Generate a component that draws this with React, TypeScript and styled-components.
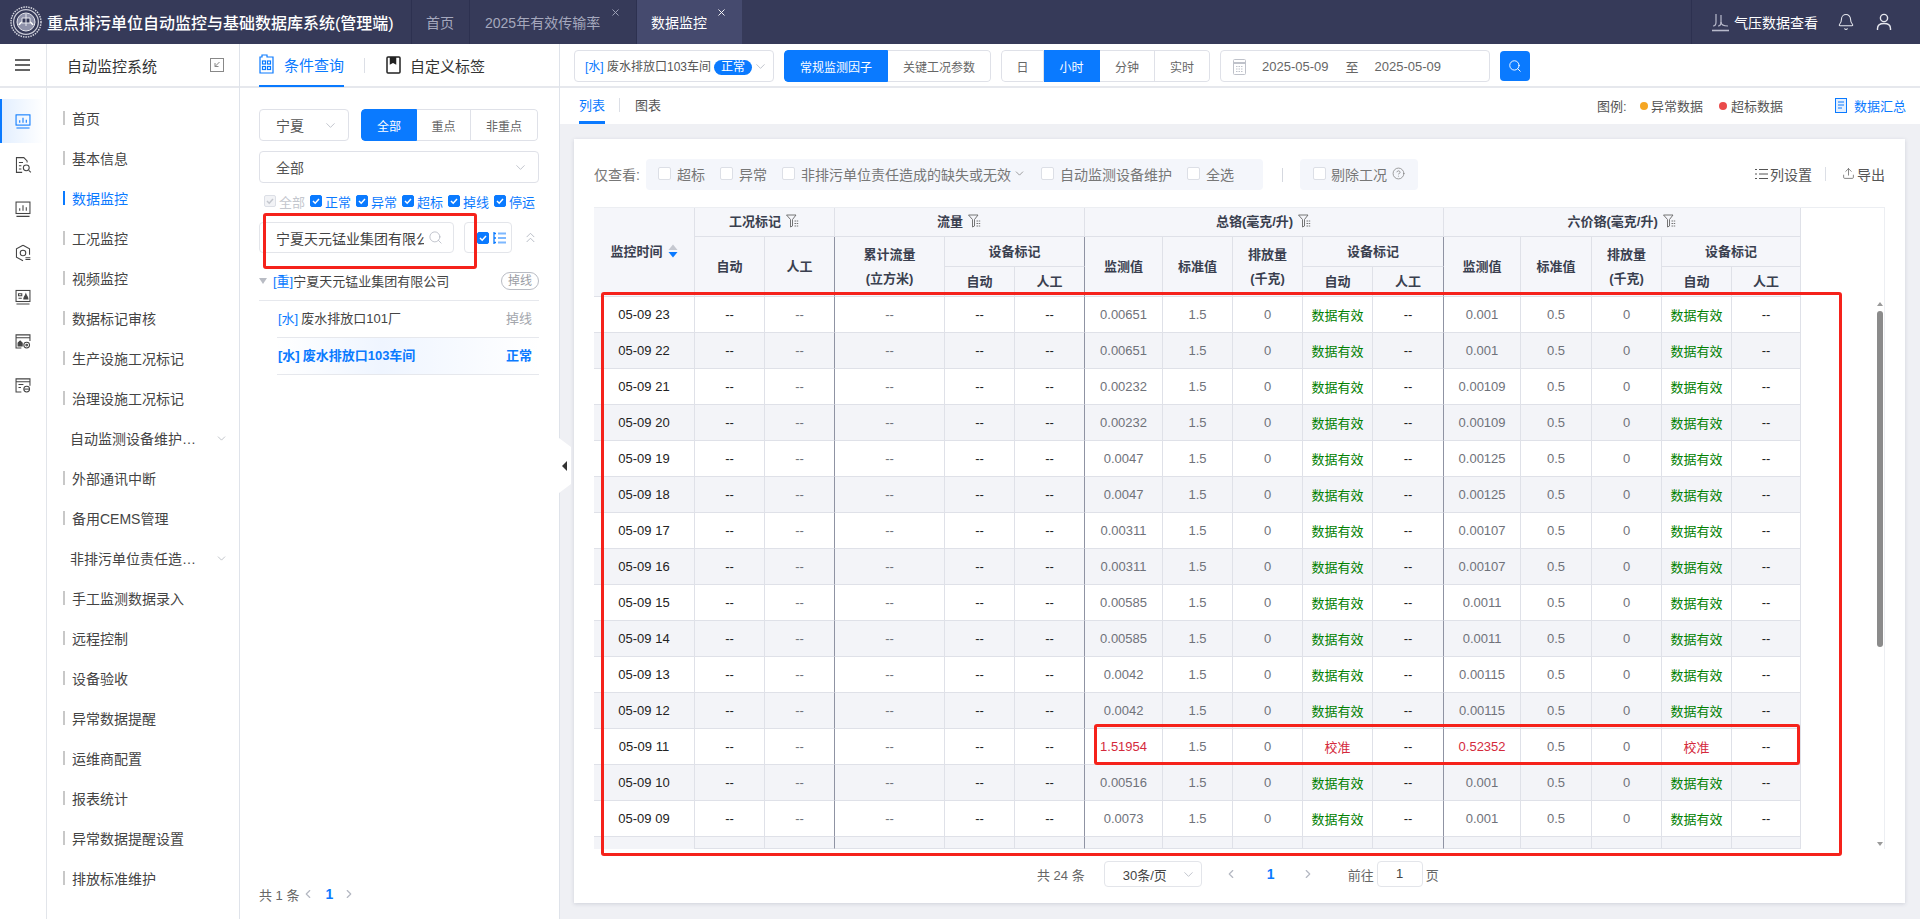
import React from 'react';
import styled, { createGlobalStyle } from 'styled-components';
import { Bell, ChevronDown, ChevronLeft, ChevronRight, ChevronsUp, CircleHelp, Search, Upload, X } from 'lucide-react';

const BLUE = '#0a7aff';
const HEAD_LINE = '#dfe1e8';
const EDGE_LINE = '#8f93a3';

const GlobalStyle = createGlobalStyle`
	html, body {
		margin: 0;
		width: 1920px;
		height: 919px;
		overflow: hidden;
		background: #fff;
		font-family: "Liberation Sans", "Noto Sans CJK SC", sans-serif;
		color: #333;
	}
	* {
		box-sizing: border-box;
	}
`;

const Shell = styled.div`
	position: relative;
	width: 1920px;
	height: 919px;
	overflow: hidden;
`;

const TopBar = styled.header`
	display: flex;
	align-items: center;
	height: 44px;
	background: #363a59;
	color: #fff;
`;

const LogoBox = styled.div`
	width: 47px;
	height: 44px;
	padding: 6px 0 0 10px;
`;

const AppTitle = styled.h1`
	width: 364px;
	margin: 0;
	font-size: 16px;
	font-weight: 500;
	white-space: nowrap;
`;

const TopTab = styled.div<{ $w: number; $active?: boolean; $pad?: number }>`
	position: relative;
	display: flex;
	align-items: center;
	width: ${p => p.$w}px;
	height: 44px;
	padding-left: ${p => p.$pad || 14}px;
	font-size: 14px;
	border-left: 1px solid #2d3150;
	color: ${p => (p.$active ? '#fff' : '#a5a8bd')};
	background: ${p => (p.$active ? '#454a6e' : 'transparent')};
	white-space: nowrap;
`;

const TabClose = styled(X)<{ $active?: boolean }>`
	position: absolute;
	top: 7px;
	right: 15px;
	width: 11px;
	height: 11px;
	color: ${p => (p.$active ? '#fff' : '#a5a8bd')};
`;

const TopRight = styled.div`
	display: flex;
	align-items: center;
	margin-left: auto;
	width: 229px;
	height: 44px;
	padding-left: 20px;
	border-left: 1px solid #2d3150;
	font-size: 14px;
`;

const PressureLabel = styled.span`
	margin: 0 19px 0 5px;
	white-space: nowrap;
`;

const TopIcon = styled.span`
	display: flex;
	margin-right: 21px;
	color: #e6e7ee;
`;

const Body = styled.div`
	display: flex;
	height: 875px;
`;

const Rail = styled.nav`
	flex: none;
	width: 47px;
	border-right: 1px solid #e2e5ea;
`;

const RailHead = styled.div`
	display: flex;
	align-items: center;
	justify-content: center;
	height: 44px;
	padding-right: 1px;
	border-bottom: 2px solid #e6e8ed;
`;

const RailList = styled.div`
	padding-top: 11px;
`;

const RailItem = styled.div<{ $active?: boolean }>`
	display: flex;
	align-items: center;
	justify-content: center;
	width: 44px;
	height: 44px;
	color: ${p => (p.$active ? BLUE : '#444')};
	border-left: 2px solid ${p => (p.$active ? BLUE : 'transparent')};
	background: ${p => (p.$active ? 'linear-gradient(90deg, #e3efff, #fff)' : 'none')};
`;

const SideBar = styled.aside`
	flex: none;
	width: 193px;
	border-right: 1px solid #dfe3ea;
`;

const SideHead = styled.div`
	display: flex;
	align-items: center;
	justify-content: space-between;
	height: 44px;
	padding: 0 15px 0 20px;
	font-size: 15px;
	color: #333;
	border-bottom: 2px solid #e6e8ed;
`;

const SideMenu = styled.ul`
	margin: 0;
	padding: 11px 0 0;
	list-style: none;
`;

const SideItem = styled.li<{ $active?: boolean; $sub?: boolean }>`
	display: flex;
	align-items: center;
	height: 40px;
	padding-left: ${p => (p.$sub ? 23 : 16)}px;
	padding-bottom: 2px;
	font-size: 14px;
	color: ${p => (p.$active ? BLUE : '#444')};
`;

const SideMark = styled.i<{ $active?: boolean }>`
	flex: none;
	width: 2px;
	height: 14px;
	margin-right: 7px;
	background: ${p => (p.$active ? BLUE : '#c8c8c8')};
`;

const SideLabel = styled.span`
	width: 127px;
	overflow: hidden;
	white-space: nowrap;
	text-overflow: ellipsis;
`;

const SideChevron = styled(ChevronDown)`
	flex: none;
	width: 13px;
	height: 13px;
	margin-left: auto;
	margin-right: 11px;
	color: #a8acb5;
	stroke-width: 1.3;
`;

const Panel = styled.section`
	flex: none;
	display: flex;
	flex-direction: column;
	width: 320px;
	border-right: 1px solid #dfe3ea;
`;

const PanelTabs = styled.div`
	display: flex;
	align-items: center;
	height: 44px;
	padding-left: 19px;
	border-bottom: 2px solid #e6e8ed;
`;

const PanelTab = styled.div<{ $active?: boolean }>`
	display: flex;
	align-items: center;
	gap: ${p => (p.$active ? 10 : 9)}px;
	height: 44px;
	font-size: 15px;
	color: ${p => (p.$active ? BLUE : '#333')};
	border-bottom: ${p => (p.$active ? `2px solid ${BLUE}` : 'none')};
	white-space: nowrap;
`;

const PanelTabGap = styled.i`
	width: 1px;
	height: 15px;
	margin: 0 21px 0 20px;
	background: #dcdfe6;
`;

const PanelBody = styled.div`
	flex: 1;
	display: flex;
	flex-direction: column;
	padding: 21px 20px 0 19px;
`;

const FieldRow = styled.div<{ $mt?: number }>`
	display: flex;
	align-items: center;
	margin-top: ${p => p.$mt || 0}px;
`;

const SelectBox = styled.div<{ $w?: number; $h?: number; $pad?: number }>`
	display: flex;
	align-items: center;
	justify-content: space-between;
	width: ${p => (p.$w ? `${p.$w}px` : '100%')};
	height: ${p => p.$h || 32}px;
	padding: 0 ${p => (p.$pad ? 5 : 10)}px 0 ${p => p.$pad || 16}px;
	font-size: 14px;
	color: #555;
	background: #fff;
	border: 1px solid #dfe1e8;
	border-radius: 4px;
	white-space: nowrap;
`;

const SelectChevron = styled(ChevronDown)`
	flex: none;
	width: 15px;
	height: 15px;
	color: #b4b8c2;
	stroke-width: 1.3;
`;

const Segment = styled.div<{ $ml?: number }>`
	display: flex;
	margin-left: ${p => p.$ml || 0}px;
	height: 32px;
	border-radius: 4px;
	overflow: hidden;
`;

const SegmentItem = styled.div<{ $w: number; $active?: boolean }>`
	display: flex;
	align-items: center;
	justify-content: center;
	width: ${p => p.$w}px;
	font-size: 12px;
	color: ${p => (p.$active ? '#fff' : '#666')};
	background: ${p => (p.$active ? BLUE : '#fff')};
	border: 1px solid ${p => (p.$active ? BLUE : '#dfe1e8')};
	border-left: none;
	white-space: nowrap;
	&:first-child {
		border-left: 1px solid ${p => (p.$active ? BLUE : '#dfe1e8')};
		border-radius: 4px 0 0 4px;
	}
	&:last-child {
		border-radius: 0 4px 4px 0;
	}
`;

const CheckRow = styled.div`
	display: flex;
	align-items: center;
	gap: 5px;
	height: 16px;
	margin: 10px 0 13px 5px;
`;

const CheckItem = styled.label<{ $off?: boolean }>`
	display: flex;
	align-items: center;
	gap: 3px;
	font-size: 13px;
	color: ${p => (p.$off ? '#c4c7ce' : BLUE)};
`;

const Tick = styled.span<{ $off?: boolean }>`
	display: flex;
	align-items: center;
	justify-content: center;
	width: 12px;
	height: 12px;
	border-radius: 2px;
	background: ${p => (p.$off ? '#f2f3f6' : BLUE)};
	border: 1px solid ${p => (p.$off ? '#dcdfe6' : BLUE)};
	color: ${p => (p.$off ? '#c4c7ce' : '#fff')};
`;

const SearchRow = styled.div`
	display: flex;
	align-items: center;
	height: 31px;
`;

const SearchBox = styled.div`
	display: flex;
	align-items: center;
	justify-content: space-between;
	width: 196px;
	height: 31px;
	padding: 0 10px 0 16px;
	border: 1px solid #e3e5ea;
	border-radius: 4px;
	font-size: 14px;
	color: #444;
`;

const SearchText = styled.span`
	width: 148px;
	overflow: hidden;
	white-space: nowrap;
`;

const TreeSwitch = styled.div`
	display: flex;
	align-items: center;
	gap: 4px;
	width: 48px;
	height: 31px;
	margin-left: 10px;
	padding-left: 12px;
	border: 1px solid #e3e5ea;
	border-radius: 4px;
`;

const CollapseUp = styled(ChevronsUp)`
	width: 17px;
	height: 17px;
	margin-left: 10px;
	color: #b4b8c2;
	stroke-width: 1.3;
`;

const TreeGroup = styled.div`
	display: flex;
	align-items: center;
	height: 37px;
	margin-top: 11px;
	padding-bottom: 3px;
	font-size: 13px;
	color: #444;
	border-bottom: 1px solid #e6e8ed;
`;

const Caret = styled.i`
	width: 0;
	height: 0;
	margin: 0 6px 0 0;
	border-left: 4px solid transparent;
	border-right: 4px solid transparent;
	border-top: 6px solid #b9bcc4;
`;

const Tag = styled.b<{ $gap?: number }>`
	margin-right: ${p => p.$gap || 0}px;
	font-weight: inherit;
	color: ${BLUE};
`;

const OfflinePill = styled.span`
	margin-left: auto;
	width: 38px;
	height: 18px;
	font-size: 12px;
	line-height: 16px;
	text-align: center;
	color: #9a9da5;
	border: 1px solid #b9bcc4;
	border-radius: 9px;
`;

const TreeLeaf = styled.div<{ $active?: boolean }>`
	display: flex;
	align-items: center;
	justify-content: space-between;
	height: 37px;
	margin-left: 18px;
	padding: 0 7px 3px 1px;
	font-size: 13px;
	font-weight: ${p => (p.$active ? 700 : 400)};
	color: ${p => (p.$active ? BLUE : '#444')};
	border-bottom: 1px solid #e6e8ed;
	background: ${p => (p.$active ? 'linear-gradient(90deg, #fff, #eff5ff 40%, #fff)' : 'none')};
`;

const LeafState = styled.span<{ $on?: boolean }>`
	color: ${p => (p.$on ? BLUE : '#a3a6ad')};
`;

const SmallPager = styled.div`
	display: flex;
	align-items: center;
	height: 20px;
	margin: auto 0 15px;
	font-size: 13px;
	color: #666;
`;

const PageNumber = styled.span<{ $ml: number; $mr: number }>`
	margin: 0 ${p => p.$mr}px 0 ${p => p.$ml}px;
	font-weight: 700;
	font-size: 14px;
	color: ${BLUE};
`;

const PagerArrow = styled.span<{ $ml?: number }>`
	display: flex;
	margin-left: ${p => p.$ml || 0}px;
	color: #b4b8c2;
`;

const Main = styled.main`
	position: relative;
	flex: 1;
	display: flex;
	flex-direction: column;
	min-width: 0;
`;

const Toolbar = styled.div`
	display: flex;
	gap: 10px;
	height: 44px;
	padding: 6px 0 0 14px;
	border-bottom: 2px solid #e6e8ed;
`;

const StationText = styled.span`
	font-size: 12px;
	color: #555;
`;

const StateBadge = styled.span`
	display: inline-block;
	width: 38px;
	margin-left: 3px;
	height: 15px;
	font-size: 12px;
	line-height: 15px;
	text-align: center;
	color: #fff;
	background: ${BLUE};
	border-radius: 8px;
`;

const DateBox = styled.div`
	display: flex;
	align-items: center;
	width: 270px;
	height: 32px;
	padding-left: 12px;
	font-size: 13px;
	color: #666;
	border: 1px solid #dfe1e8;
	border-radius: 4px;
`;

const DateValue = styled.span<{ $ml: number }>`
	margin-left: ${p => p.$ml}px;
	white-space: nowrap;
`;

const SearchButton = styled.button`
	display: flex;
	align-items: center;
	justify-content: center;
	width: 30px;
	height: 30px;
	margin-top: 1px;
	padding: 0;
	color: #fff;
	background: ${BLUE};
	border: none;
	border-radius: 4px;
`;

const ViewTabs = styled.div`
	display: flex;
	align-items: center;
	height: 36px;
	padding: 0 14px 0 19px;
	font-size: 13px;
`;

const ViewTab = styled.div<{ $active?: boolean }>`
	display: flex;
	align-items: center;
	height: 36px;
	padding-bottom: ${p => (p.$active ? 0 : 3)}px;
	color: ${p => (p.$active ? BLUE : '#555')};
	border-bottom: ${p => (p.$active ? `3px solid ${BLUE}` : 'none')};
`;

const ViewGap = styled.i`
	width: 1px;
	height: 14px;
	margin: 0 15px 3px 14px;
	background: #dcdfe6;
`;

const Legend = styled.div`
	display: flex;
	align-items: center;
	margin-left: auto;
	padding-bottom: 1px;
	color: #555;
	white-space: nowrap;
`;

const LegendTitle = styled.span`
	width: 43px;
`;

const LegendDot = styled.i<{ $c: string; $ml?: number; $gap: number }>`
	width: 8px;
	height: 8px;
	margin: 0 ${p => p.$gap}px 0 ${p => p.$ml || 0}px;
	border-radius: 50%;
	background: ${p => p.$c};
`;

const SummaryLink = styled.span`
	display: flex;
	align-items: center;
	gap: 7px;
	margin-left: 52px;
	color: ${BLUE};
`;

const Content = styled.div`
	flex: 1;
	padding: 15px 15px 0 14px;
	background: #eff0f4;
`;

const Card = styled.div`
	height: 764px;
	padding: 20px 20px 0;
	background: #fff;
	box-shadow: 0 1px 4px rgba(40, 50, 80, 0.16);
`;

const CollapseBump = styled.div`
	position: absolute;
	top: 394px;
	left: -1px;
	display: flex;
	align-items: center;
	width: 12px;
	height: 55px;
	padding-left: 3px;
	background: #fff;
	clip-path: polygon(0 0, 100% 9px, 100% calc(100% - 9px), 0 100%);
`;

const BumpArrow = styled.i`
	width: 0;
	height: 0;
	border-top: 5px solid transparent;
	border-bottom: 5px solid transparent;
	border-right: 5px solid #333;
`;

const FilterRow = styled.div`
	display: flex;
	align-items: center;
	height: 31px;
	font-size: 14px;
	color: #777;
`;

const FilterLabel = styled.span`
	width: 52px;
	padding-bottom: 2px;
	white-space: nowrap;
`;

const FilterBox = styled.div`
	display: flex;
	align-items: center;
	gap: 15px;
	width: 617px;
	height: 31px;
	padding: 0 0 2px 12px;
	background: #f4f6fb;
	border-radius: 4px;
`;

const FilterOption = styled.label`
	display: flex;
	align-items: center;
	gap: 6px;
	white-space: nowrap;
`;

const OptionChevron = styled(ChevronDown)`
	width: 13px;
	height: 13px;
	margin-left: -4px;
	stroke-width: 1.3;
`;

const EmptyCheck = styled.i`
	flex: none;
	width: 13px;
	height: 13px;
	background: #fff;
	border: 1px solid #dcdfe6;
	border-radius: 2px;
`;

const FilterGap = styled.i`
	width: 1px;
	height: 14px;
	margin: 0 17px 0 19px;
	background: #d5d8df;
`;

const ExcludeBox = styled.div`
	display: flex;
	align-items: center;
	gap: 5px;
	width: 118px;
	height: 31px;
	padding: 0 0 2px 13px;
	background: #f4f6fb;
	border-radius: 4px;
	white-space: nowrap;
`;

const Actions = styled.div`
	display: flex;
	align-items: center;
	margin-left: auto;
	padding-bottom: 2px;
	color: #555;
	white-space: nowrap;
`;

const ActionLink = styled.span`
	display: flex;
	align-items: center;
	gap: 2px;
`;

const ActionGap = styled.i`
	width: 1px;
	height: 14px;
	margin: 0 16px 0 13px;
	background: #dcdfe6;
`;

const TableWrap = styled.div`
	position: relative;
	width: 1291px;
	height: 642px;
	margin-top: 17px;
	overflow: hidden;
	border-top: 1px solid #eceef2;
	border-right: 1px solid #eceef2;
`;

const DataTable = styled.table`
	width: 1207px;
	margin-top: -1px;
	table-layout: fixed;
	border-collapse: separate;
	border-spacing: 0;
	font-size: 13px;
`;

const Col = styled.col<{ $w: number }>`
	width: ${p => p.$w}px;
`;

const HeadRow = styled.tr`
	height: 30px;
`;

const Th = styled.th<{ $edge?: boolean }>`
	padding: 0;
	font-size: 13px;
	font-weight: 700;
	line-height: 24px;
	text-align: center;
	color: #3a3f4f;
	background: #f5f6fa;
	border-right: 1px solid ${p => (p.$edge ? EDGE_LINE : HEAD_LINE)};
	border-bottom: 1px solid ${HEAD_LINE};
	white-space: nowrap;
`;

const HeadIcon = styled.span`
	display: inline-flex;
	vertical-align: -2px;
	margin-left: 5px;
`;

const BodyRow = styled.tr<{ $even: boolean }>`
	height: 36px;
	background: ${p => (p.$even ? '#f3f4f8' : '#fff')};
`;

const TONES: Record<string, string> = {
	dark: '#222',
	soft: '#6f727a',
	good: '#008000',
	bad: '#d42a3c'
};

const Td = styled.td<{ $edge?: boolean; $tone: string }>`
	padding: 0;
	text-align: center;
	color: ${p => TONES[p.$tone]};
	border-right: 1px solid ${p => (p.$edge ? EDGE_LINE : HEAD_LINE)};
	border-bottom: 1px solid ${HEAD_LINE};
	white-space: nowrap;
`;

const TailRow = styled.tr`
	height: 12px;
	background: #f3f4f8;
`;

const TailFirst = styled.td`
	padding: 0;
	border-right: 1px solid ${HEAD_LINE};
`;

const TailCell = styled.td<{ $edge?: boolean }>`
	padding: 0;
	border-right: 1px solid ${p => (p.$edge ? EDGE_LINE : HEAD_LINE)};
	border-bottom: 1px solid ${HEAD_LINE};
`;

const TailLine = styled.i`
	position: absolute;
	left: 1207px;
	top: 641px;
	width: 84px;
	height: 1px;
	background: #dfe1e8;
`;

const ScrollThumb = styled.i`
	position: absolute;
	top: 103px;
	right: 1px;
	width: 6px;
	height: 336px;
	border-radius: 3px;
	background: #8b8b8b;
`;

const ScrollArrow = styled.i<{ $up?: boolean }>`
	position: absolute;
	${p => (p.$up ? 'top: 94px;' : 'top: 634px;')}
	right: 1px;
	width: 0;
	height: 0;
	border-left: 3px solid transparent;
	border-right: 3px solid transparent;
	${p => (p.$up ? 'border-bottom: 4px solid #9a9a9a;' : 'border-top: 4px solid #9a9a9a;')}
`;

const PagerRow = styled.div`
	display: flex;
	align-items: center;
	height: 26px;
	margin-top: 12px;
	padding-left: 443px;
	font-size: 13px;
	color: #666;
	white-space: nowrap;
`;

const PagerSize = styled.div`
	display: flex;
	align-items: center;
	justify-content: space-between;
	width: 98px;
	height: 26px;
	margin-left: 19px;
	padding: 0 5px 0 18px;
	color: #444;
	border: 1px solid #e3e5ea;
	border-radius: 4px;
`;

const MainPages = styled.div`
	display: flex;
	align-items: center;
	width: 124px;
	margin-left: 22px;
`;

const JumpBox = styled.span`
	width: 46px;
	height: 26px;
	margin: 0 3px;
	line-height: 24px;
	text-align: center;
	color: #444;
	border: 1px solid #e3e5ea;
	border-radius: 4px;
`;

const Mark = styled.div<{ $x: number; $y: number; $w: number; $h: number }>`
	position: absolute;
	left: ${p => p.$x}px;
	top: ${p => p.$y}px;
	width: ${p => p.$w}px;
	height: ${p => p.$h}px;
	border: 3px solid #f5221b;
	border-radius: 3px;
	pointer-events: none;
`;

const Logo = () => (
	<svg width="32" height="32" viewBox="0 0 32 32" fill="none">
		<circle cx="16" cy="16" r="15" stroke="#d9dae2" strokeWidth="1.4" strokeDasharray="1.5 1" />
		<circle cx="16" cy="16" r="12.4" stroke="#c9cad6" strokeWidth="1.2" />
		<circle cx="16" cy="16" r="9" fill="#8f92aa" stroke="#e6e7ee" />
		<path d="M9 19c3-5 11-5 14 0" stroke="#fff" strokeWidth="1.4" />
		<path d="M12 12h8v5h-8z" fill="#363a59" stroke="#e6e7ee" />
		<path d="M16 8v12" stroke="#e6e7ee" />
	</svg>
);

const PressureIcon = () => (
	<svg width="17" height="19" viewBox="0 0 17 19" fill="none" stroke="#b8bacb" strokeWidth="1.2">
		<path d="M1 13c2 0 3-1 3-4V1" />
		<path d="M6 13c2 0 3-1 3-4V2" />
		<path d="M9 9c0 3 2 4 7 4" />
		<path d="M0 17.5h17" strokeWidth="1.6" />
	</svg>
);

const UserIcon = () => (
	<svg width="16" height="18" viewBox="0 0 16 18" fill="none" stroke="#e6e7ee" strokeWidth="1.4">
		<circle cx="8" cy="5" r="3.6" />
		<path d="M1.5 17v-1.5C1.5 12 4 10.5 8 10.5s6.5 1.5 6.5 5V17" />
	</svg>
);

const MenuIcon = () => (
	<svg width="15" height="12" viewBox="0 0 15 12" fill="none" stroke="#333" strokeWidth="1.6">
		<path d="M0 1h15M0 6h15M0 11h15" />
	</svg>
);

const FoldIcon = () => (
	<svg width="14" height="14" viewBox="0 0 14 14" fill="none" stroke="#888" strokeWidth="1">
		<rect x="0.5" y="0.5" width="13" height="13" />
		<path d="M9.5 4 5 8.5M5 5v3.5h3.5" />
	</svg>
);

const RailGlyph = ({ kind }: { kind: number }) => {
	const shapes: Record<number, React.ReactNode> = {
		1: (
			<>
				<rect x="2.5" y="3.5" width="17" height="12.5" />
				<path d="M3 19.5h16M7 13v-3M11 13V7M15 13V9.5" />
			</>
		),
		2: (
			<>
				<path d="M16 8V6l-4-4H3v18h7" />
				<path d="M6 8h5M6 12h3M6 16h3" />
				<circle cx="15" cy="14.5" r="3.6" />
				<path d="m18 17.5 2.6 2.6" />
			</>
		),
		3: (
			<>
				<rect x="2.5" y="2.5" width="17" height="14" />
				<path d="M3 20h16M7 13v-3M11 13V6.5M15 13V9" />
			</>
		),
		4: (
			<>
				<path d="M11 1.5 19 6v7M11 20.5 3 16V6l8-4.5" />
				<circle cx="11" cy="11" r="3.4" />
				<path d="M14 19h6M14 16.8h6" />
			</>
		),
		5: (
			<>
				<rect x="2.5" y="3" width="17" height="13.5" />
				<path d="M3 19.5h16M5.5 7h4v2.5h-4zM5.5 12.5h4" />
				<path d="M12 13.5c0-3 1.5-3 2.5-6 1 3 2.5 3 2.5 6z" fill="currentColor" />
			</>
		),
		6: (
			<>
				<path d="M9 19.5H2.5v-16h17V11M2.5 7h17" />
				<path d="M5 17v-3.5l2.5-2.5 2.5 2.5V17z" fill="currentColor" />
				<circle cx="15.5" cy="16" r="3.5" />
				<circle cx="15.5" cy="16" r="1" />
			</>
		),
		7: (
			<>
				<path d="M9 19.5H2.5v-16h17V12M2.5 7h17M5.5 10.5h6M5.5 14h3" />
				<circle cx="15.5" cy="16" r="3.5" />
				<path d="M12.5 16h6" />
			</>
		)
	};
	return (
		<svg width="18" height="18" viewBox="0 0 22 22" fill="none" stroke="currentColor" strokeWidth="1.3">
			{shapes[kind]}
		</svg>
	);
};

const QueryIcon = () => (
	<svg width="15" height="20" viewBox="0 0 15 20" fill="none" stroke={BLUE} strokeWidth="1.2">
		<path d="M1 3h2V1h5v2h6v16H1z" />
		<rect x="3.5" y="7" width="3" height="3" />
		<rect x="8.5" y="7" width="3" height="3" />
		<rect x="3.5" y="12.5" width="3" height="3" />
		<rect x="8.5" y="12.5" width="3" height="3" />
	</svg>
);

const BookmarkIcon = () => (
	<svg width="15" height="18" viewBox="0 0 15 18" fill="none" stroke="#222" strokeWidth="1.5">
		<rect x="1" y="1" width="13" height="16" rx="1" />
		<path d="M4.5 1v6.5L7 6l2.5 1.5V1" fill="#222" />
	</svg>
);

const TickIcon = () => (
	<svg width="10" height="10" viewBox="0 0 10 10" fill="none" stroke="currentColor" strokeWidth="1.5">
		<path d="m2 5 2.2 2.2L8 3" />
	</svg>
);

const TreeIcon = () => (
	<svg width="13" height="12" viewBox="0 0 13 12" fill="none" stroke={BLUE} strokeWidth="1.3">
		<path d="M1 0v12M1 1.5h2M1 6h2M1 10.5h2" />
		<path d="M5 1.5h8M5 6h8M5 10.5h8" strokeWidth="2" stroke="#7db8ff" />
	</svg>
);

const CalendarIcon = () => (
	<svg width="13" height="17" viewBox="0 0 13 17" fill="#d7d9df" stroke="#bfc2ca" strokeWidth="1">
		<rect x="0.5" y="1.5" width="12" height="15" rx="1" fill="none" />
		<path d="M1 5h11" strokeWidth="2" />
		<path d="M3 8.5h7M3 11h7M3 13.5h7" strokeDasharray="1.5 1" />
	</svg>
);

const SummaryIcon = () => (
	<svg width="12" height="15" viewBox="0 0 12 15" fill="none" stroke={BLUE} strokeWidth="1">
		<rect x="0.5" y="0.5" width="11" height="14" fill="#e3efff" />
		<path d="M3 4h6M3 7h6M3 10h4" />
	</svg>
);

const FunnelIcon = () => (
	<svg width="14" height="14" viewBox="0 0 14 14" fill="none" stroke="#666" strokeWidth="0.9">
		<path d="M0.5 1h9.5L6.5 5.5V12L4.5 13V5.5z" />
		<path d="M8.5 7h4M8.5 9.5h4M8.5 12h4" strokeDasharray="1.5 0.7" />
	</svg>
);

const SortIcon = () => (
	<svg width="10" height="14" viewBox="0 0 10 14">
		<path d="M5 0.5 9.5 6h-9z" fill="#c5c8d0" />
		<path d="M5 13.5 0.5 8h9z" fill={BLUE} />
	</svg>
);

const ColumnsIcon = () => (
	<svg width="13" height="12" viewBox="0 0 13 12" fill="none" stroke="#555" strokeWidth="1">
		<path d="M0 1.5h2M0 6h2M0 10.5h2M4 1.5h9M4 6h9M4 10.5h9" />
	</svg>
);

const MENU = [
	{ name: '首页' },
	{ name: '基本信息' },
	{ name: '数据监控', active: true },
	{ name: '工况监控' },
	{ name: '视频监控' },
	{ name: '数据标记审核' },
	{ name: '生产设施工况标记' },
	{ name: '治理设施工况标记' },
	{ name: '自动监测设备维护记录', sub: true },
	{ name: '外部通讯中断' },
	{ name: '备用CEMS管理' },
	{ name: '非排污单位责任造成的缺失', sub: true },
	{ name: '手工监测数据录入' },
	{ name: '远程控制' },
	{ name: '设备验收' },
	{ name: '异常数据提醒' },
	{ name: '运维商配置' },
	{ name: '报表统计' },
	{ name: '异常数据提醒设置' },
	{ name: '排放标准维护' }
];

const COLUMNS = [101, 70, 70, 110, 70, 70, 78, 70, 70, 70, 71, 77, 71, 70, 70, 69];
const EDGES = [2, 5, 10];

const ROWS = [
	['23', '0.00651', '0.001'],
	['22', '0.00651', '0.001'],
	['21', '0.00232', '0.00109'],
	['20', '0.00232', '0.00109'],
	['19', '0.0047', '0.00125'],
	['18', '0.0047', '0.00125'],
	['17', '0.00311', '0.00107'],
	['16', '0.00311', '0.00107'],
	['15', '0.00585', '0.0011'],
	['14', '0.00585', '0.0011'],
	['13', '0.0042', '0.00115'],
	['12', '0.0042', '0.00115'],
	['11', '1.51954', '0.52352'],
	['10', '0.00516', '0.001'],
	['09', '0.0073', '0.001']
];

const rowCells = (hour: string, total: string, hex: string) => {
	const alarm = hour === '11';
	const value = alarm ? 'bad' : 'soft';
	const flag = alarm ? '校准' : '数据有效';
	const flagTone = alarm ? 'bad' : 'good';
	return [
		{ text: `05-09 ${hour}`, tone: 'dark' },
		{ text: '--', tone: 'dark' },
		{ text: '--', tone: 'soft' },
		{ text: '--', tone: 'soft' },
		{ text: '--', tone: 'dark' },
		{ text: '--', tone: 'dark' },
		{ text: total, tone: value },
		{ text: '1.5', tone: 'soft' },
		{ text: '0', tone: 'soft' },
		{ text: flag, tone: flagTone },
		{ text: '--', tone: 'dark' },
		{ text: hex, tone: value },
		{ text: '0.5', tone: 'soft' },
		{ text: '0', tone: 'soft' },
		{ text: flag, tone: flagTone },
		{ text: '--', tone: 'dark' }
	];
};

const HeadFilter = () => (
	<HeadIcon>
		<FunnelIcon />
	</HeadIcon>
);

const TableHead = () => (
	<thead>
		<HeadRow>
			<Th rowSpan={3}>
				监控时间
				<HeadIcon>
					<SortIcon />
				</HeadIcon>
			</Th>
			<Th colSpan={2}>
				工况标记
				<HeadFilter />
			</Th>
			<Th colSpan={3}>
				流量
				<HeadFilter />
			</Th>
			<Th colSpan={5}>
				总铬(毫克/升)
				<HeadFilter />
			</Th>
			<Th colSpan={5}>
				六价铬(毫克/升)
				<HeadFilter />
			</Th>
		</HeadRow>
		<HeadRow>
			<Th rowSpan={2}>自动</Th>
			<Th rowSpan={2} $edge>
				人工
			</Th>
			<Th rowSpan={2}>
				累计流量
				<br />
				(立方米)
			</Th>
			<Th colSpan={2} $edge>
				设备标记
			</Th>
			<Th rowSpan={2}>监测值</Th>
			<Th rowSpan={2}>标准值</Th>
			<Th rowSpan={2}>
				排放量
				<br />
				(千克)
			</Th>
			<Th colSpan={2} $edge>
				设备标记
			</Th>
			<Th rowSpan={2}>监测值</Th>
			<Th rowSpan={2}>标准值</Th>
			<Th rowSpan={2}>
				排放量
				<br />
				(千克)
			</Th>
			<Th colSpan={2}>设备标记</Th>
		</HeadRow>
		<HeadRow>
			<Th>自动</Th>
			<Th $edge>人工</Th>
			<Th>自动</Th>
			<Th $edge>人工</Th>
			<Th>自动</Th>
			<Th>人工</Th>
		</HeadRow>
	</thead>
);

const App = () => {
	return (
		<Shell>
			<GlobalStyle />
			<TopBar>
				<LogoBox>
					<Logo />
				</LogoBox>
				<AppTitle>重点排污单位自动监控与基础数据库系统(管理端)</AppTitle>
				<TopTab $w={58}>首页</TopTab>
				<TopTab $w={167} $pad={15}>
					2025年有效传输率
					<TabClose />
				</TopTab>
				<TopTab $w={106} $active>
					数据监控
					<TabClose $active />
				</TopTab>
				<TopRight>
					<PressureIcon />
					<PressureLabel>气压数据查看</PressureLabel>
					<TopIcon>
						<Bell size={18} strokeWidth={1.4} />
					</TopIcon>
					<TopIcon>
						<UserIcon />
					</TopIcon>
				</TopRight>
			</TopBar>
			<Body>
				<Rail>
					<RailHead>
						<MenuIcon />
					</RailHead>
					<RailList>
						{[1, 2, 3, 4, 5, 6, 7].map(kind => (
							<RailItem key={kind} $active={kind === 1}>
								<RailGlyph kind={kind} />
							</RailItem>
						))}
					</RailList>
				</Rail>
				<SideBar>
					<SideHead>
						自动监控系统
						<FoldIcon />
					</SideHead>
					<SideMenu>
						{MENU.map(item => (
							<SideItem key={item.name} $active={item.active} $sub={item.sub}>
								{!item.sub && <SideMark $active={item.active} />}
								{item.sub ? <SideLabel>{item.name}</SideLabel> : item.name}
								{item.sub && <SideChevron />}
							</SideItem>
						))}
					</SideMenu>
				</SideBar>
				<Panel>
					<PanelTabs>
						<PanelTab $active>
							<QueryIcon />
							条件查询
						</PanelTab>
						<PanelTabGap />
						<PanelTab>
							<BookmarkIcon />
							自定义标签
						</PanelTab>
					</PanelTabs>
					<PanelBody>
						<FieldRow>
							<SelectBox $w={90}>
								宁夏
								<SelectChevron />
							</SelectBox>
							<Segment $ml={12}>
								<SegmentItem $w={56} $active>
									全部
								</SegmentItem>
								<SegmentItem $w={54}>重点</SegmentItem>
								<SegmentItem $w={67}>非重点</SegmentItem>
							</Segment>
						</FieldRow>
						<FieldRow $mt={10}>
							<SelectBox>
								全部
								<SelectChevron />
							</SelectBox>
						</FieldRow>
						<CheckRow>
							<CheckItem $off>
								<Tick $off>
									<TickIcon />
								</Tick>
								全部
							</CheckItem>
							{['正常', '异常', '超标', '掉线', '停运'].map(label => (
								<CheckItem key={label}>
									<Tick>
										<TickIcon />
									</Tick>
									{label}
								</CheckItem>
							))}
						</CheckRow>
						<SearchRow>
							<SearchBox>
								<SearchText>宁夏天元锰业集团有限公司</SearchText>
								<Search size={15} color="#b4b8c2" strokeWidth={1.3} />
							</SearchBox>
							<TreeSwitch>
								<Tick>
									<TickIcon />
								</Tick>
								<TreeIcon />
							</TreeSwitch>
							<CollapseUp />
						</SearchRow>
						<TreeGroup>
							<Caret />
							<Tag>[重]</Tag>
							宁夏天元锰业集团有限公司
							<OfflinePill>掉线</OfflinePill>
						</TreeGroup>
						<TreeLeaf>
							<span>
								<Tag $gap={3}>[水]</Tag>
								废水排放口101厂
							</span>
							<LeafState>掉线</LeafState>
						</TreeLeaf>
						<TreeLeaf $active>
							<span>
								<Tag $gap={3}>[水]</Tag>
								废水排放口103车间
							</span>
							<LeafState $on>正常</LeafState>
						</TreeLeaf>
						<SmallPager>
							共 1 条
							<PagerArrow $ml={2}>
								<ChevronLeft size={14} />
							</PagerArrow>
							<PageNumber $ml={10} $mr={9}>
								1
							</PageNumber>
							<PagerArrow>
								<ChevronRight size={14} />
							</PagerArrow>
						</SmallPager>
					</PanelBody>
				</Panel>
				<Main>
					<Toolbar>
						<SelectBox $w={200} $pad={10}>
							<StationText>
								<Tag>[水]</Tag> 废水排放口103车间
								<StateBadge>正常</StateBadge>
							</StationText>
							<SelectChevron />
						</SelectBox>
						<Segment>
							<SegmentItem $w={104} $active>
								常规监测因子
							</SegmentItem>
							<SegmentItem $w={103}>关键工况参数</SegmentItem>
						</Segment>
						<Segment>
							<SegmentItem $w={43}>日</SegmentItem>
							<SegmentItem $w={56} $active>
								小时
							</SegmentItem>
							<SegmentItem $w={55}>分钟</SegmentItem>
							<SegmentItem $w={55}>实时</SegmentItem>
						</Segment>
						<DateBox>
							<CalendarIcon />
							<DateValue $ml={16}>2025-05-09</DateValue>
							<DateValue $ml={17}>至</DateValue>
							<DateValue $ml={16}>2025-05-09</DateValue>
						</DateBox>
						<SearchButton>
							<Search size={14} strokeWidth={1.6} />
						</SearchButton>
					</Toolbar>
					<ViewTabs>
						<ViewTab $active>列表</ViewTab>
						<ViewGap />
						<ViewTab>图表</ViewTab>
						<Legend>
							<LegendTitle>图例:</LegendTitle>
							<LegendDot $c="#f5a623" $gap={3} />
							异常数据
							<LegendDot $c="#ea4b4b" $ml={16} $gap={4} />
							超标数据
							<SummaryLink>
								<SummaryIcon />
								数据汇总
							</SummaryLink>
						</Legend>
					</ViewTabs>
					<Content>
						<Card>
							<FilterRow>
								<FilterLabel>仅查看:</FilterLabel>
								<FilterBox>
									<FilterOption>
										<EmptyCheck />
										超标
									</FilterOption>
									<FilterOption>
										<EmptyCheck />
										异常
									</FilterOption>
									<FilterOption>
										<EmptyCheck />
										非排污单位责任造成的缺失或无效
										<OptionChevron />
									</FilterOption>
									<FilterOption>
										<EmptyCheck />
										自动监测设备维护
									</FilterOption>
									<FilterOption>
										<EmptyCheck />
										全选
									</FilterOption>
								</FilterBox>
								<FilterGap />
								<ExcludeBox>
									<EmptyCheck />
									剔除工况
									<CircleHelp size={13} strokeWidth={1.3} />
								</ExcludeBox>
								<Actions>
									<ActionLink>
										<ColumnsIcon />
										列设置
									</ActionLink>
									<ActionGap />
									<ActionLink>
										<Upload size={13} strokeWidth={1.3} />
										导出
									</ActionLink>
								</Actions>
							</FilterRow>
							<TableWrap>
								<DataTable>
									<colgroup>
										{COLUMNS.map((w, i) => (
											<Col key={i} $w={w} />
										))}
									</colgroup>
									<TableHead />
									<tbody>
										{ROWS.map(([hour, total, hex], r) => (
											<BodyRow key={hour} $even={r % 2 === 1}>
												{rowCells(hour, total, hex).map((cell, c) => (
													<Td key={c} $tone={cell.tone} $edge={EDGES.includes(c)}>
														{cell.text}
													</Td>
												))}
											</BodyRow>
										))}
										<TailRow>
											<TailFirst />
											{COLUMNS.slice(1).map((_, c) => (
												<TailCell key={c} $edge={EDGES.includes(c + 1)} />
											))}
										</TailRow>
									</tbody>
								</DataTable>
								<TailLine />
								<ScrollArrow $up />
								<ScrollThumb />
								<ScrollArrow />
							</TableWrap>
							<PagerRow>
								共 24 条
								<PagerSize>
									30条/页
									<SelectChevron />
								</PagerSize>
								<MainPages>
									<PagerArrow>
										<ChevronLeft size={14} />
									</PagerArrow>
									<PageNumber $ml={29} $mr={27}>
										1
									</PageNumber>
									<PagerArrow>
										<ChevronRight size={14} />
									</PagerArrow>
								</MainPages>
								前往
								<JumpBox>1</JumpBox>页
							</PagerRow>
						</Card>
					</Content>
					<CollapseBump>
						<BumpArrow />
					</CollapseBump>
				</Main>
			</Body>
			<Mark $x={263} $y={213} $w={214} $h={56} />
			<Mark $x={601} $y={292} $w={1241} $h={564} />
			<Mark $x={1094} $y={724} $w={706} $h={41} />
		</Shell>
	);
};

export default App;
